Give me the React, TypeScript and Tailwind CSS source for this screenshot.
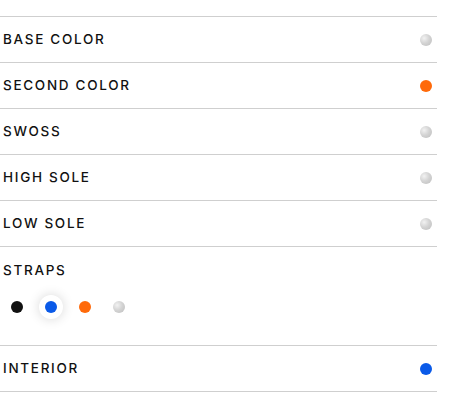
import React from "react";

const silver = "bg-[radial-gradient(circle_at_35%_35%,#f2f2f2_0%,#d4d4d4_45%,#bdbdbd_100%)]";

const rows: { label: string; dot: string }[] = [
  { label: "BASE COLOR", dot: silver },
  { label: "SECOND COLOR", dot: "bg-[#ff6a0a]" },
  { label: "SWOSS", dot: silver },
  { label: "HIGH SOLE", dot: silver },
  { label: "LOW SOLE", dot: silver },
];

const labelCls = "text-[13.5px] font-medium tracking-[1.7px] text-[#111]";

function Dot({ cls }: { cls: string }) {
  return <span className={"block w-3 h-3 rounded-full " + cls} />;
}

function Row({ label, dot }: { label: string; dot: string }) {
  return (
    <div className="flex items-center justify-between h-[46px] border-b border-[#cfcfcf] pl-[3px] pr-[5px]">
      <span className={labelCls}>{label}</span>
      <Dot cls={dot} />
    </div>
  );
}

export default function App() {
  const straps = ["bg-[#111]", "bg-[#0a5ae8]", "bg-[#ff6a0a]", silver];
  return (
    <div className="bg-white w-[449px] h-[407px] pt-4" style={{ fontFamily: 'Inter, sans-serif' }}>
      <div className="w-[437px] border-t border-[#cfcfcf]">
        {rows.map((r) => (
          <Row key={r.label} {...r} />
        ))}
        <div className="border-b border-[#cfcfcf] h-[99px] pl-[3px]">
          <div className="h-[46px] flex items-center">
            <span className={labelCls}>STRAPS</span>
          </div>
          <div className="flex items-center gap-[10px] pl-[2px] mt-[2px]">
            {straps.map((c, i) => (
              <div
                key={i}
                className={
                  "w-6 h-6 rounded-full flex items-center justify-center " +
                  (i === 1 ? "bg-white shadow-[0_0_12px_rgba(0,0,0,0.16)]" : "")
                }
              >
                <Dot cls={c} />
              </div>
            ))}
          </div>
        </div>
        <Row label="INTERIOR" dot="bg-[#0a5ae8]" />
      </div>
    </div>
  );
}
